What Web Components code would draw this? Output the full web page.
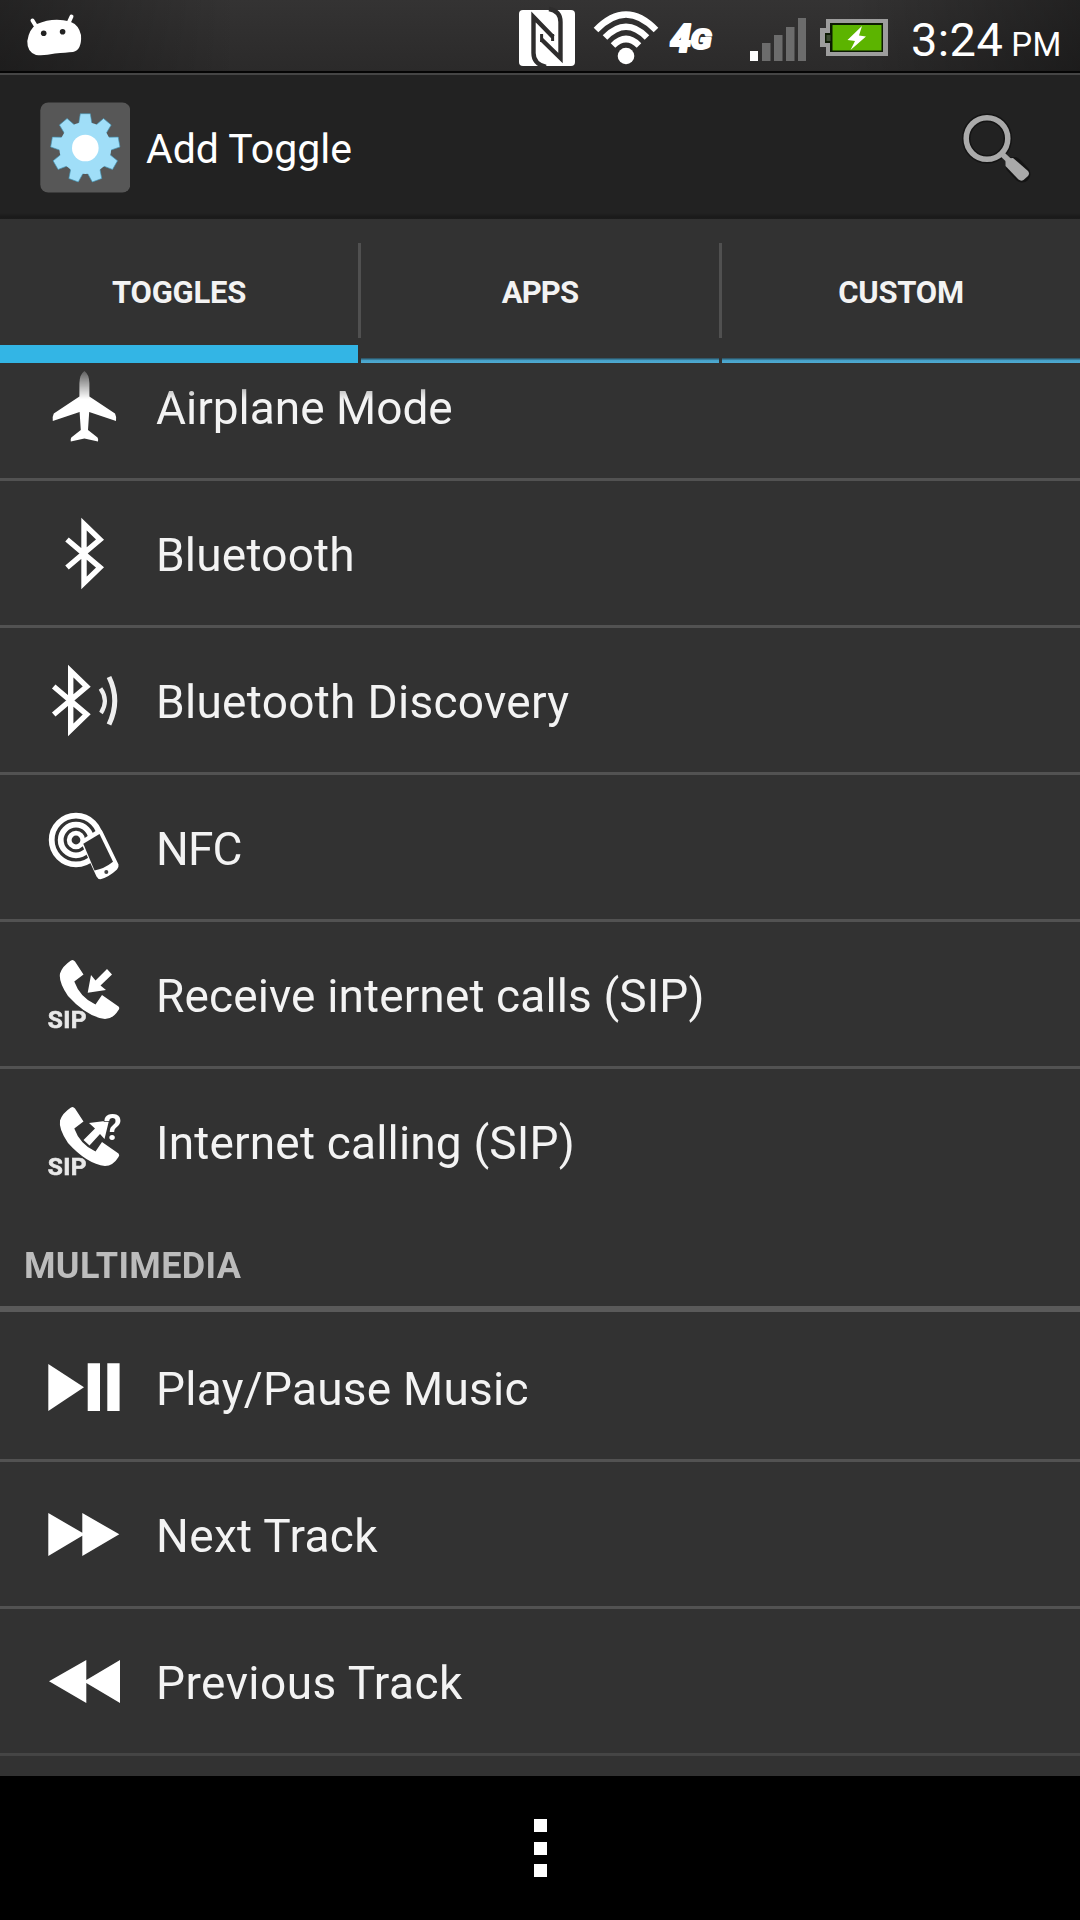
<!DOCTYPE html>
<html lang="en">
<head>
<meta charset="utf-8">
<title>Add Toggle</title>
<style>
  body {
    margin: 0;
    background: #000;
    font-family: Roboto, "Liberation Sans", sans-serif;
  }
</style>
</head>
<body>
<toggle-screen>
  <status-bar slot="status" time="3:24" period="PM"></status-bar>
  <action-bar slot="action">Add Toggle</action-bar>
  <tab-bar slot="tabs">
    <tab-item selected>TOGGLES</tab-item>
    <tab-item style="letter-spacing: -.8px">APPS</tab-item>
    <tab-item>CUSTOM</tab-item>
  </tab-bar>
  <toggle-list>
    <toggle-row icon="airplane" tracking="0">Airplane Mode</toggle-row>
    <toggle-row icon="bluetooth" tracking=".2">Bluetooth</toggle-row>
    <toggle-row icon="discovery" tracking=".3">Bluetooth Discovery</toggle-row>
    <toggle-row icon="nfc" tracking="-.9">NFC</toggle-row>
    <toggle-row icon="sip-in">Receive internet calls (SIP)</toggle-row>
    <toggle-row icon="sip-out" tracking=".17" last>Internet calling (SIP)</toggle-row>
    <list-header>MULTIMEDIA</list-header>
    <toggle-row icon="play" tracking=".25">Play/Pause Music</toggle-row>
    <toggle-row icon="next" tracking=".35">Next Track</toggle-row>
    <toggle-row icon="prev" tracking=".45">Previous Track</toggle-row>
  </toggle-list>
  <nav-bar slot="nav"></nav-bar>
</toggle-screen>

<script>
const BT = `<path d="M23 26.5 L56 54.5 L40 70 V11 L56 26.5 L23 54.5" fill="none" stroke="#fff" stroke-width="5.4"/>`;
const PHONE = `<path d="M27 6.5 Q29 5 31 7.5 L39.5 20.5 L30.3 27.5 Q36 43.5 51.5 50.5 L58 41 L74.5 52.5 Q76 54 74.5 56 Q69 65 61 65 Q43 63 24 42 Q14.5 28 16 19.5 Q18.5 12 27 6.5z"/>`;
const SIP = `<text x="3.8" y="74" font-size="24.5" font-weight="700" letter-spacing=".3" fill="#e8e8e8" stroke="#e8e8e8" stroke-width=".6">SIP</text>`;

const icons = {
  airplane: `<path d="M40.4 5 Q45 8 45.4 17 V30.5 L71 47.5 Q72.5 50 72 55 L45.2 46 L44 64 L53.5 71.5 Q54.5 73 54 75.5 L40.4 72.5 L26.8 75.5 Q26.3 73 27.3 71.5 L36.8 64 L35.6 46 L8.8 55 Q8.3 50 9.8 47.5 L35.4 30.5 V17 Q35.8 8 40.4 5z"/>`,
  bluetooth: BT,
  discovery: `<g transform="translate(-13.3 0)">${BT}</g>
    <g fill="none" stroke="#eee"><path d="M56.5 28.5 Q65 40.5 57 53" stroke-width="4.2"/><path d="M65 17 Q76.5 40.5 65 64.5" stroke-width="5"/></g>`,
  nfc: `<g fill="none" stroke="#fff" stroke-width="5.8"><circle cx="32" cy="33" r="24.3"/><circle cx="32" cy="33" r="15.3"/><circle cx="32" cy="33" r="6.8" stroke-width="4.8"/></g>
    <path d="M36.5 34.5 Q37 33 39 32 L54 22.5 Q57 21.5 58.3 24 L74.5 57.5 Q75 60.5 73 62.5 Q65 70 56.5 72.3 Q54 72.3 52.5 69.5z"/>
    <path d="M39.3 36.8 L55.5 27 L69 54.8 Q60 62 50.5 63.5z" fill="#323232"/><circle cx="62.3" cy="65" r="2" fill="#444"/>`,
  "sip-in": PHONE + SIP + `<path d="M43.7 38.7 L47 21 L51.5 26.5 L63 15 L68 20.5 L56.5 31.5 L62 36z"/>`,
  "sip-out": PHONE + SIP + `<path d="M65 19.5 L45 22 L51 27.5 L39.5 39 L45.5 44.5 L56 33 L60.5 38z"/>
    <text x="59.5" y="38.5" font-size="37" font-weight="600" stroke="#323232" stroke-width="1.5" paint-order="stroke">?</text>`,
  play: `<path d="M4.3 17 L40 40.3 L4.3 64z"/><path d="M43.7 16.3h12.3v47.7h-12.3zM63.3 16.3h12.3v47.7h-12.3z"/>`,
  next: `<path d="M4.3 19 L38.3 38.8 V19 L75.3 40.3 L38.3 62 V41.8 L4.3 62z"/>`,
  prev: `<path d="M76 19 V62 L42.3 42 V62 L5 40.3 L42.3 19 V39z"/>`
};

class ToggleScreen extends HTMLElement {
  constructor() {
    super();
    this.attachShadow({ mode: "open" }).innerHTML = `
      <style>
        :host {
          display: flex;
          flex-direction: column;
          width: 1080px;
          height: 1920px;
          background: #323232;
          overflow: hidden;
        }
        main { flex: 1; min-height: 0; display: flex; }
      </style>
      <slot name="status"></slot>
      <slot name="action"></slot>
      <slot name="tabs"></slot>
      <main><slot></slot></main>
      <slot name="nav"></slot>
    `;
  }
}

class StatusBar extends HTMLElement {
  constructor() {
    super();
    this.attachShadow({ mode: "open" });
  }

  connectedCallback() {
    this.shadowRoot.innerHTML = `
      <style>
        :host {
          display: flex;
          justify-content: space-between;
          box-sizing: border-box;
          height: 73px;
          border-bottom: 2px solid #050505;
          background: linear-gradient(90deg, rgba(0,0,0,.32), transparent 22%, transparent 78%, rgba(0,0,0,.35)),
            linear-gradient(#343333, #2b2a2a);
          color: #fff;
        }
        svg { display: block; flex: none; }
        .right { display: flex; }
        .clock {
          display: flex;
          align-items: baseline;
          width: 169px;
          white-space: nowrap;
          line-height: 79px;
          font-size: 47px;
          letter-spacing: .4px;
        }
        small { font-size: 33px; margin-left: 8px; }
      </style>
      <svg width="100" height="71" fill="#fff">
        <path d="M37 24 Q53 17 70 21.5 Q79 25 81 35 Q82 50 73 52 Q66 52.5 55 53.5 Q44 56 36 55 Q27 52 27.3 41 Q29 29 37 24z"/>
        <path d="M32.5 20.5 L36.5 27 M71.5 16.5 L68.5 23" stroke="#fff" stroke-width="4" stroke-linecap="round"/>
        <circle cx="43.7" cy="33.3" r="2.8" fill="#222"/><circle cx="62.6" cy="31.8" r="2.8" fill="#222"/>
      </svg>
      <div class="right">
        <svg width="401" height="71" viewBox="510 0 401 71" fill="#fff">
          <rect x="519" y="10" width="56" height="56" rx="4"/>
          <g fill="none" stroke="#2e2d2d" stroke-width="4.4">
            <path d="M546 67 Q533.5 64 533.5 53 V17 L553 37"/>
            <path d="M549 9 Q560.5 11 560.5 22 V58 L541.5 39.5"/>
            <path d="M541.6 34 V42 M552.6 34 V41" stroke-width="3"/>
          </g>
          <path d="M541.8 34.500 L553 45" stroke="#2e2d2d" stroke-width="0"/>
          <circle cx="626" cy="56" r="8.3"/>
          <g fill="none" stroke="#fff" stroke-width="6.4">
            <path d="M596 30 Q626 -1 656 30"/>
            <path d="M605 37.5 Q626 16 647 37.5"/>
            <path d="M613 45.5 Q626 32.5 639 45.5"/>
          </g>
          <g font-weight="900" font-style="italic" stroke="#fff" stroke-width="2" stroke-linejoin="round">
            <text x="670" y="51.5" font-size="38">4</text>
            <text transform="translate(690.500 49) scale(1.13 1)" font-size="28">G</text>
          </g>
          <path d="M750 51h8v10h-8z"/>
          <path d="M762 43h8.5v18h-8.5zM774 35h8.5v26h-8.5zM786 27h8.5v34h-8.5zM798 18h8v43h-8z" fill="#6c6c6c"/>
          <path d="M826 19h62v37h-62v-9h-6v-19h6z" fill="#9d9d9d"/>
          <path d="M830 23h53v29h-53v-9h-5v-10h5z" fill="#0c1a02"/>
          <path d="M832.5 25h49v25.5h-49z" fill="#5cb400"/>
          <path d="M826.5 35h4v6h-4z" fill="#3b4a30"/>
          <path d="M862 26 L847.5 40 L855 41 L850.5 50 L866 36.5 L859 35.5z"/>
        </svg>
        <div class="clock"><span>${this.getAttribute("time")}</span><small>${this.getAttribute("period")}</small></div>
      </div>
    `;
  }
}

class ActionBar extends HTMLElement {
  constructor() {
    super();
    // nine teeth, one every 40 degrees
    let teeth = "";
    for (let a = 0; a < 360; a += 40) {
      teeth += `<path d="M-6.8 -23 L-5 -34.3 H5 L6.8 -23z" transform="rotate(${a})"/>`;
    }
    this.attachShadow({ mode: "open" }).innerHTML = `
      <style>
        :host {
          display: flex;
          align-items: center;
          box-sizing: border-box;
          height: 146px;
          padding: 0 48px 0 40px;
          border-top: 2px solid #454545;
          background: linear-gradient(#222 138px, #1a1a1a 142px, #1c1c1c);
          color: #fff;
        }
        .title {
          flex: 1;
          padding: 4px 0 0 16px;
          font-size: 41px;
          line-height: 48px;
        }
        svg { display: block; flex: none; }
      </style>
      <svg width="90" height="91" viewBox="-45.3 -46 90 91">
        <rect x="-45" y="-45.5" width="90" height="90" rx="8" fill="#575757"/>
        <g fill="#a0def8" stroke="#4695b5" stroke-width=".6">${teeth}</g>
        <circle r="26" fill="#a0def8"/>
        <circle r="13.3" fill="#fff"/>
      </svg>
      <div class="title"><slot></slot></div>
      <svg width="72" height="72" viewBox="960 110.5 72 72">
        <g fill="none" stroke="#141414"><circle cx="987" cy="138" r="20.8" stroke-width="8.5"/><path d="M1014 165 L1022 173.5" stroke-width="17" stroke-linecap="round"/></g>
        <g stroke="#aaa" fill="none">
          <circle cx="987" cy="138" r="20.8" stroke-width="5.5"/>
          <path d="M1001.5 153 L1011 162" stroke-width="5.5"/>
        </g>
        <path d="M1008 158 L1013 157.5 L1028 170.5 Q1030 173 1028 175.5 L1023.5 179.5 Q1021 181 1018.5 179 L1005.5 165.5 L1005.5 160.5z" fill="#aaa"/>
      </svg>
    `;
  }
}

class TabBar extends HTMLElement {
  constructor() {
    super();
    this.attachShadow({ mode: "open" }).innerHTML = `
      <style>
        :host {
          display: grid;
          grid-template-columns: repeat(3, 358px);
          column-gap: 3px;
          height: 144px;
          background:
            linear-gradient(#505050, #505050) 358px 24px / 3px 95px no-repeat,
            linear-gradient(#505050, #505050) 719px 24px / 3px 95px no-repeat,
            #323232;
        }
      </style>
      <slot></slot>
    `;
  }
}

class TabItem extends HTMLElement {
  constructor() {
    super();
    this.attachShadow({ mode: "open" }).innerHTML = `
      <style>
        :host {
          display: flex;
          align-items: center;
          justify-content: center;
          box-sizing: border-box;
          padding-top: 3px;
          font-size: 31px;
          font-weight: 700;
          letter-spacing: -.25px;
          color: #f3f3f3;
          background: linear-gradient(#2f5a6d 1px, #45a0c8 2px, #4fabd2) bottom / 100% 5px no-repeat;
        }
        :host([selected]) {
          background: linear-gradient(#33b5e5, #33b5e5) bottom / 100% 18px no-repeat;
        }
      </style>
      <slot></slot>
    `;
  }
}

class ToggleList extends HTMLElement {
  constructor() {
    super();
    // content fades out at both scroll edges
    this.attachShadow({ mode: "open" }).innerHTML = `
      <style>
        :host {
          display: block;
          width: 100%;
          overflow: hidden;
          -webkit-mask-image: linear-gradient(transparent, #000 36px, #000 calc(100% - 36px), transparent);
          mask-image: linear-gradient(transparent, #000 36px, #000 calc(100% - 36px), transparent);
        }
        .content { margin-top: -29px; }
      </style>
      <div class="content"><slot></slot></div>
    `;
  }
}

class ToggleRow extends HTMLElement {
  constructor() {
    super();
    this.attachShadow({ mode: "open" });
  }

  connectedCallback() {
    let tracking = this.getAttribute("tracking") || ".12";
    this.shadowRoot.innerHTML = `
      <style>
        :host {
          display: flex;
          align-items: center;
          height: 144px;
          padding-left: 44px;
          border-bottom: 3px solid #525252;
          color: #f3f3f3;
          font-size: 46px;
          letter-spacing: ${tracking}px;
        }
        :host([last]) { border-bottom: 0; }
        svg { display: block; flex: none; margin-right: 32px; letter-spacing: 0; }
        span { padding-top: 4px; white-space: nowrap; }
      </style>
      <svg width="80" height="80" fill="#fff">${icons[this.getAttribute("icon")]}</svg>
      <span><slot></slot></span>
    `;
  }
}

class ListHeader extends HTMLElement {
  constructor() {
    super();
    this.attachShadow({ mode: "open" }).innerHTML = `
      <style>
        :host {
          display: block;
          height: 93px;
          padding-left: 24px;
          margin-bottom: 3px;
          border-bottom: 6px solid #5a5a5a;
          line-height: 107px;
          font-size: 36px;
          font-weight: 700;
          letter-spacing: .35px;
          color: #bcbcbc;
        }
      </style>
      <slot></slot>
    `;
  }
}

class NavBar extends HTMLElement {
  constructor() {
    super();
    this.attachShadow({ mode: "open" }).innerHTML = `
      <style>
        :host {
          display: flex;
          flex-direction: column;
          align-items: center;
          justify-content: center;
          gap: 9.5px;
          height: 144px;
          background: #000;
        }
        i { width: 13px; height: 13px; background: #fff; }
      </style>
      <i></i><i></i><i></i>
    `;
  }
}

customElements.define("toggle-screen", ToggleScreen);
customElements.define("status-bar", StatusBar);
customElements.define("action-bar", ActionBar);
customElements.define("tab-bar", TabBar);
customElements.define("tab-item", TabItem);
customElements.define("toggle-list", ToggleList);
customElements.define("toggle-row", ToggleRow);
customElements.define("list-header", ListHeader);
customElements.define("nav-bar", NavBar);
</script>
</body>
</html>
